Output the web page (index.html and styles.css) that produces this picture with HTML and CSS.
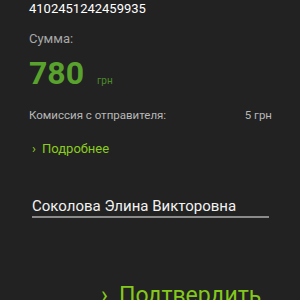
FILE: index.html
```html
<!DOCTYPE html>
<html>
<head>
<meta charset="utf-8">
<link rel="stylesheet" href="styles.css">
</head>
<body>
<div class="screen">
  <div class="card-number">4102451242459935</div>
  <div class="label">Сумма:</div>
  <div class="amount"><span class="amount-value">780</span><span class="amount-cur">грн</span></div>
  <div class="fee-row"><span>Комиссия с отправителя:</span><span>5 грн</span></div>
  <div class="more"><span class="chev">›</span>Подробнее</div>
  <div class="name-field">Соколова Элина Викторовна</div>
  <div class="confirm"><span class="chev-big">›</span>Подтвердить</div>
</div>
</body>
</html>
```
FILE: styles.css
```css
html, body {
  margin: 0;
  padding: 0;
  background: #222222;
  font-family: Roboto, "Noto Sans", sans-serif;
}
.screen {
  width: 300px;
  height: 300px;
  overflow: hidden;
  padding: 0 28px 0 29px;
  box-sizing: border-box;
  display: flex;
  flex-direction: column;
}
.card-number {
  color: #ffffff;
  font-size: 13px;
  line-height: 15px;
  margin-top: 1px;
}
.label {
  color: #a8a8a8;
  font-size: 13px;
  line-height: 15px;
  margin-top: 15px;
}
.amount {
  display: flex;
  align-items: baseline;
  margin-top: 10px;
  height: 34px;
}
.amount-value {
  color: #58a22d;
  font-size: 32px;
  font-weight: 700;
  line-height: 34px;
}
.amount-cur {
  color: #4d8a2a;
  font-size: 10px;
  margin-left: 13px;
}
.fee-row {
  display: flex;
  justify-content: space-between;
  color: #b8b8b8;
  font-size: 11.5px;
  line-height: 14px;
  margin-top: 18px;
}
.more {
  color: #8acd1e;
  font-size: 13px;
  line-height: 15px;
  margin-top: 19px;
  padding-left: 3px;
}
.chev {
  display: inline-block;
  width: 10px;
}
.name-field {
  color: #f2f2f2;
  font-size: 15px;
  line-height: 18px;
  margin: 41px 3px 0 3px;
  padding-bottom: 1px;
  border-bottom: 2px solid #8a8a8a;
}
.confirm {
  color: #84c81c;
  font-size: 23px;
  line-height: 27px;
  margin-top: 64px;
  padding-left: 72px;
}
.chev-big {
  display: inline-block;
  width: 18px;
}
```
